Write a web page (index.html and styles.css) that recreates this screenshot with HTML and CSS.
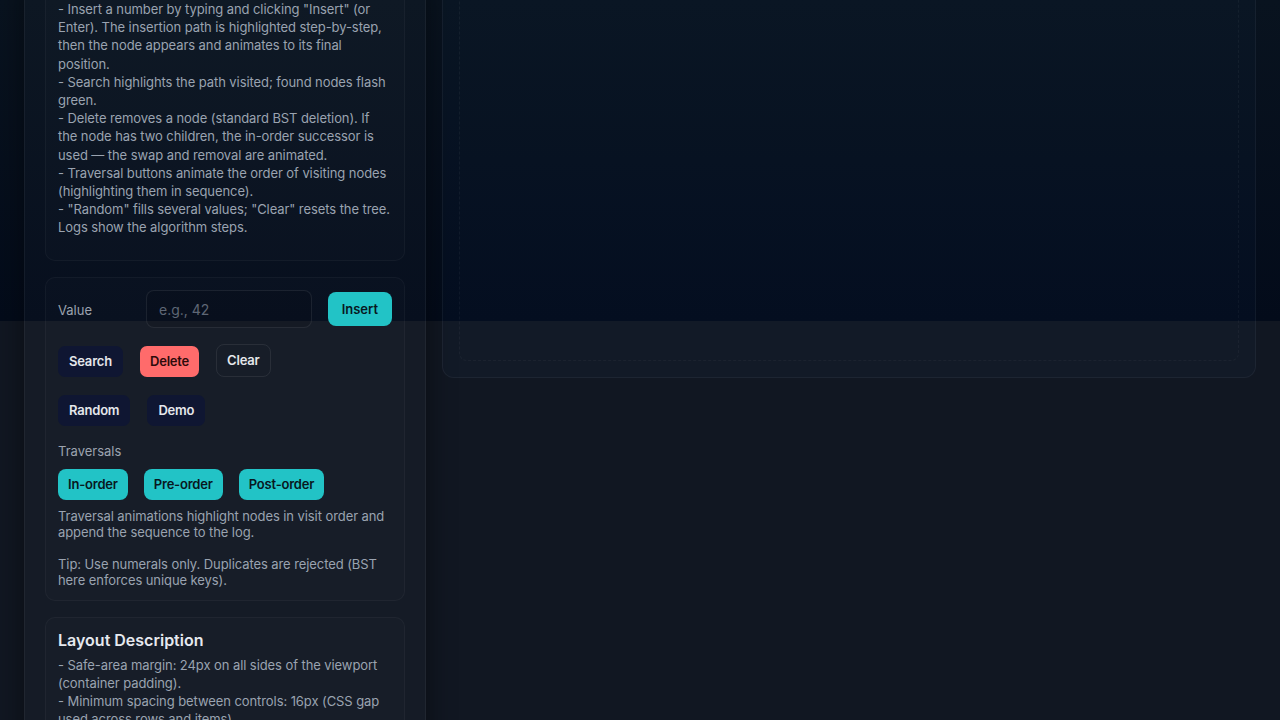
FILE: index.html
```html
<!DOCTYPE html>
<html lang="en">
<head>
<meta charset="utf-8">
<title>BST Visualizer</title>
<link rel="stylesheet" href="styles.css">
</head>
<body>
<div class="app">
  <aside class="sidebar">
    <section class="card help">
      <p class="help-text">- Insert a number by typing and clicking "Insert" (or Enter). The insertion path is highlighted step-by-step, then the node appears and animates to its final position.<br>- Search highlights the path visited; found nodes flash green.<br>- Delete removes a node (standard BST deletion). If the node has two children, the in-order successor is used — the swap and removal are animated.<br>- Traversal buttons animate the order of visiting nodes (highlighting them in sequence).<br>- "Random" fills several values; "Clear" resets the tree. Logs show the algorithm steps.</p>
    </section>
    <section class="card controls">
      <div class="input-row">
        <label class="field-label" for="val">Value</label>
        <input id="val" class="text-input" type="text" placeholder="e.g., 42">
        <button class="btn btn-teal btn-insert">Insert</button>
      </div>
      <div class="btn-row row-end">
        <button class="btn btn-dark">Search</button>
        <button class="btn btn-danger">Delete</button>
        <button class="btn btn-ghost">Clear</button>
      </div>
      <div class="btn-row">
        <button class="btn btn-dark">Random</button>
        <button class="btn btn-dark">Demo</button>
      </div>
      <div class="group-label">Traversals</div>
      <div class="btn-row trav-row">
        <button class="btn btn-teal btn-trav">In-order</button>
        <button class="btn btn-teal btn-trav">Pre-order</button>
        <button class="btn btn-teal btn-trav">Post-order</button>
      </div>
      <p class="note">Traversal animations highlight nodes in visit order and append the sequence to the log.</p>
      <p class="note note-tip">Tip: Use numerals only. Duplicates are rejected (BST here enforces unique keys).</p>
    </section>
    <section class="card layout-desc">
      <h2 class="card-title">Layout Description</h2>
      <p class="help-text">- Safe-area margin: 24px on all sides of the viewport (container padding).<br>- Minimum spacing between controls: 16px (CSS gap used across rows and items).<br>- Left column holds instructions and controls; the right column hosts the tree canvas.</p>
    </section>
  </aside>
  <main class="stage">
    <div class="canvas"></div>
  </main>
</div>
</body>
</html>
```

FILE: styles.css
```css
html, body {
  margin: 0;
}

body {
  background:
    linear-gradient(180deg, #09131f 0px, #030b1a 321px) 0 0 / 100% 321px no-repeat,
    #111722;
  font-family: Inter, "Noto Sans", "Liberation Sans", sans-serif;
  color: #9ca3af;
  min-height: 100vh;
}

.app {
  display: grid;
  grid-template-columns: 402px 1fr;
  gap: 16px;
  align-items: start;
  padding: 0 24px 24px;
  margin-top: -34px;
}

.sidebar {
  background: rgba(255, 255, 255, 0.018);
  border: 1px solid rgba(255, 255, 255, 0.05);
  border-radius: 14px;
  padding: 20px;
  box-shadow: 0 10px 30px rgba(0, 0, 0, 0.45);
  display: flex;
  flex-direction: column;
  gap: 16px;
}

.card {
  background: rgba(255, 255, 255, 0.012);
  border: 1px solid rgba(255, 255, 255, 0.04);
  border-radius: 10px;
  padding: 12px;
}

.help-text {
  margin: 0 0 12px;
  font-size: 13px;
  line-height: 1.4;
  letter-spacing: -0.08px;
  color: #9aa3b0;
}

.input-row {
  display: grid;
  grid-template-columns: 72px 1fr auto;
  gap: 16px;
  align-items: center;
  margin-bottom: 16px;
}

.field-label {
  font-size: 13px;
  color: #9ca3af;
  padding-top: 1px;
}

.text-input {
  box-sizing: border-box;
  height: 38px;
  width: 100%;
  min-width: 0;
  padding: 0 12px;
  font: 14px Inter, "Noto Sans", sans-serif;
  color: #e5e7eb;
  background: rgba(0, 0, 0, 0.08);
  border: 1px solid rgba(255, 255, 255, 0.08);
  border-radius: 8px;
  outline: none;
}

.text-input::placeholder {
  color: #5f6775;
}

.btn {
  font: 600 13px/15px Inter, "Noto Sans", sans-serif;
  letter-spacing: -0.2px;
  padding: 8px 10px;
  border: 0;
  border-radius: 7px;
  cursor: pointer;
}

.btn-dark {
  background: #0f1632;
  color: #e5e7eb;
  padding: 8px 11px;
}

.btn-danger {
  background: #ff6b6b;
  color: #2e0b0b;
}

.btn-ghost {
  background: transparent;
  border: 1px solid rgba(255, 255, 255, 0.08);
  color: #e5e7eb;
  border-radius: 8px;
}

.btn-teal {
  background: #22c3c6;
  color: #08181f;
  border-radius: 8px;
}

.btn-insert {
  padding: 9.5px 14px;
  letter-spacing: 0;
}

.btn-row {
  display: flex;
  flex-wrap: wrap;
  gap: 16px 17px;
  align-items: center;
  margin-bottom: 16px;
}

.row-end {
  align-items: flex-end;
  margin-bottom: 18px;
}

.trav-row {
  gap: 16px;
  margin-bottom: 8px;
}

.group-label {
  font-size: 13px;
  line-height: 1.4;
  color: #9ca3af;
  margin-top: 2px;
  margin-bottom: 8px;
}

.note {
  margin: 0;
  font-size: 13px;
  line-height: 16px;
  letter-spacing: -0.08px;
  color: #9aa3b0;
}

.note-tip {
  margin-top: 16px;
}

.card-title {
  margin: 0 0 6px;
  font-size: 16px;
  line-height: 20px;
  font-weight: 600;
  color: #e6e9ef;
}

.stage {
  background: rgba(60, 110, 200, 0.035);
  border: 1px solid rgba(255, 255, 255, 0.05);
  border-radius: 12px;
  padding: 16px;
}

.canvas {
  box-sizing: border-box;
  height: 378px;
  border: 1px dashed rgba(255, 255, 255, 0.04);
  border-radius: 8px;
}
```
